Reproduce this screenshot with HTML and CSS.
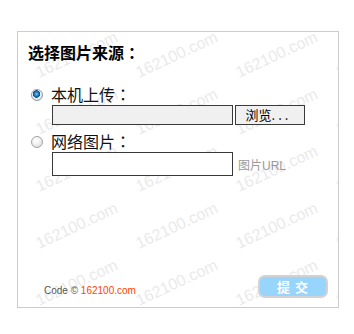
FILE: index.html
```html
<!DOCTYPE html>
<html lang="zh-CN">
<head>
<meta charset="utf-8">
<title>选择图片来源</title>
<link rel="stylesheet" href="styles.css">
</head>
<body>
<form class="box">
  <div class="wm" aria-hidden="true">
    <span>162100.com</span><span>162100.com</span><span>162100.com</span><span>162100.com</span>
    <span>162100.com</span><span>162100.com</span><span>162100.com</span><span>162100.com</span>
    <span>162100.com</span><span>162100.com</span><span>162100.com</span><span>162100.com</span>
    <span>162100.com</span><span>162100.com</span><span>162100.com</span><span>162100.com</span>
    <span>162100.com</span><span>162100.com</span><span>162100.com</span><span>162100.com</span>
  </div>
  <h3 class="title">选择图片来源<span class="colon" lang="zh-TW">：</span></h3>

  <label class="opt first">
    <input type="radio" name="src" class="radio" checked>
    <span class="lbl">本机上传<span class="colon" lang="zh-TW">：</span></span>
  </label>
  <div class="field">
    <input type="text" class="file" readonly>
    <button type="button" class="browse">浏览<span class="dots">...</span></button>
  </div>

  <label class="opt second">
    <input type="radio" name="src" class="radio">
    <span class="lbl">网络图片<span class="colon" lang="zh-TW">：</span></span>
  </label>
  <div class="field">
    <input type="text" class="url">
    <span class="hint">图片URL</span>
  </div>

  <div class="foot">
    <span class="copy">Code © <span class="site">162100.com</span></span>
    <button type="button" class="submit">提 交</button>
  </div>
</form>
</body>
</html>
```
FILE: styles.css
```css
html, body {
  margin: 0;
  padding: 0;
  background: #fff;
}
body {
  font-family: "Liberation Sans", "Noto Sans CJK SC", sans-serif;
  color: #000;
}
.box {
  position: relative;
  isolation: isolate;
  overflow: hidden;
  box-sizing: border-box;
  width: 322px;
  height: 277px;
  margin: 31px 0 0 17px;
  padding: 10px 10px 9px 10px;
  border: 1px solid #cccccc;
  display: flex;
  flex-direction: column;
  align-items: flex-start;
}
.wm {
  position: absolute;
  inset: 0;
  z-index: -1;
  display: grid;
  grid-template-columns: repeat(4, 100px);
  grid-auto-rows: 57px;
  pointer-events: none;
}
.wm span {
  display: inline-block;
  justify-self: start;
  align-self: start;
  margin: 33px 0 0 21px;
  font-family: "Liberation Sans", sans-serif;
  font-size: 16px;
  line-height: 16px;
  white-space: nowrap;
  color: #eaeaea;
  transform: rotate(-25deg);
  transform-origin: 0 13px;
}
.title {
  margin: 0;
  font-family: "Noto Sans CJK SC", sans-serif;
  font-size: 16px;
  font-weight: bold;
  line-height: 20px;
}
.colon {
  font-family: "Noto Sans CJK TC", sans-serif;
}
.opt {
  display: flex;
  align-items: center;
  height: 20px;
}
.opt.first { margin-top: 22px; }
.opt.second { margin-top: 6px; }
.radio {
  appearance: none;
  -webkit-appearance: none;
  box-sizing: border-box;
  width: 12px;
  height: 12px;
  margin: 1px 8px 0 3px;
  border-radius: 50%;
  border: 1px solid #a4a4a4;
  background: radial-gradient(circle at 40% 35%, #ffffff 0, #f2f2f2 40%, #d4d4d4 100%);
}
.radio:checked {
  border-color: #8f9aa3;
  background:
    radial-gradient(circle at 45% 40%, #8fd0f6 0, #2a8bd3 1.6px, #0e5d9f 3px, #0a4f8a 3.5px, rgba(255,255,255,0) 4px),
    radial-gradient(circle at 40% 35%, #ffffff 0, #f0f0f0 50%, #cfcfcf 100%);
}
.lbl {
  font-family: "Noto Sans CJK SC", sans-serif;
  font-size: 16px;
  line-height: 20px;
  color: #111;
}
.field {
  display: flex;
  align-items: flex-end;
  margin: 1px 0 0 24px;
}
.file {
  box-sizing: border-box;
  width: 181px;
  height: 20px;
  margin: 0;
  padding: 0;
  border: 1px solid #3a3a3a;
  background: #f0f0f0;
  outline: none;
}
.browse {
  box-sizing: border-box;
  width: 70px;
  height: 20px;
  margin: 0 0 0 2px;
  padding: 0 3px 0 0;
  border: 1px solid #3a3a3a;
  background: #f0f0f0;
  font-family: "Noto Sans CJK SC", sans-serif;
  font-size: 13px;
  line-height: 16px;
  color: #000;
}
.dots {
  letter-spacing: 3px;
}
.url {
  box-sizing: border-box;
  width: 181px;
  height: 24px;
  margin: 0;
  padding: 0 3px;
  border: 1px solid #3a3a3a;
  background: #fff;
  outline: none;
}
.hint {
  margin: 0 0 3px 5px;
  font-size: 12px;
  line-height: 14px;
  color: #9a9a9a;
}
.foot {
  margin-top: auto;
  align-self: stretch;
  display: flex;
  justify-content: space-between;
  align-items: flex-end;
}
.copy {
  margin: 0 0 1px 16px;
  font-family: "Liberation Sans", sans-serif;
  font-size: 10px;
  line-height: 12px;
  color: #555;
}
.site {
  color: #ff4400;
}
.submit {
  box-sizing: border-box;
  width: 70px;
  height: 23px;
  margin: 0;
  padding: 0;
  border: 2px solid #d2d2d2;
  border-radius: 7px;
  background: #98d5fc;
  color: #fff;
  font-family: "Noto Sans CJK SC", sans-serif;
  font-size: 13px;
  font-weight: bold;
  line-height: 17px;
  letter-spacing: 1px;
}
```
